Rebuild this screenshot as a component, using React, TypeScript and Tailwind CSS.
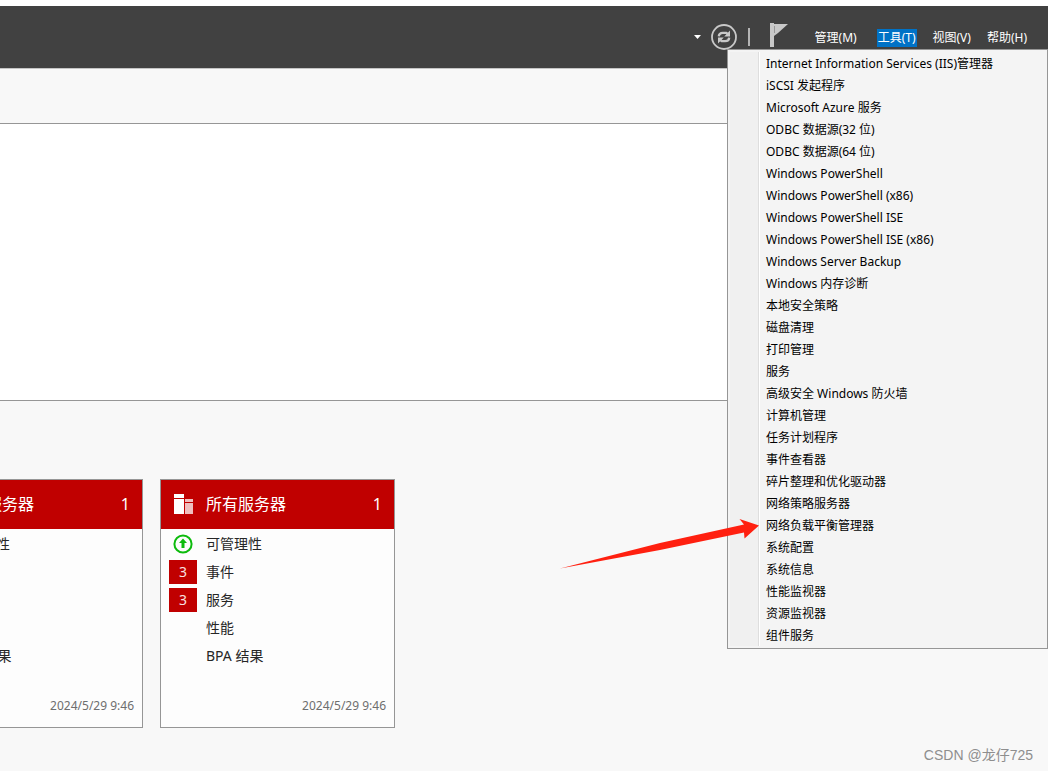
import React from 'react';

const tools = [
  'Internet Information Services (IIS)管理器',
  'iSCSI 发起程序',
  'Microsoft Azure 服务',
  'ODBC 数据源(32 位)',
  'ODBC 数据源(64 位)',
  'Windows PowerShell',
  'Windows PowerShell (x86)',
  'Windows PowerShell ISE',
  'Windows PowerShell ISE (x86)',
  'Windows Server Backup',
  'Windows 内存诊断',
  '本地安全策略',
  '磁盘清理',
  '打印管理',
  '服务',
  '高级安全 Windows 防火墙',
  '计算机管理',
  '任务计划程序',
  '事件查看器',
  '碎片整理和优化驱动器',
  '网络策略服务器',
  '网络负载平衡管理器',
  '系统配置',
  '系统信息',
  '性能监视器',
  '资源监视器',
  '组件服务',
];

const RefreshIcon = () => (
  <svg width="26" height="26" viewBox="0 0 26 26" fill="none" stroke="#c8c8c8">
    <circle cx="13" cy="13" r="12" strokeWidth="1.8" />
    <path d="M7.8 12.4c.2-2.4 1.8-3.6 4-3.6h3.4l1.6 1.2" strokeWidth="2.3" />
    <path d="M18.2 13.6c-.2 2.4-1.8 3.6-4 3.6h-3.4L9.2 16" strokeWidth="2.3" />
    <path d="M19 6.6v5.8h-5.8zM7 19.4v-5.8h5.8z" fill="#c8c8c8" stroke="none" />
  </svg>
);

const FlagIcon = () => (
  <svg width="18" height="24" viewBox="0 0 18 24" fill="#c8c8c8">
    <path d="M0 0h4v24H0z" />
    <path d="M4 1h14L8 10l-4 3z" />
    <path d="M4.5 3v7" stroke="#8a8a8a" strokeWidth="0.8" />
  </svg>
);

const ServersIcon = () => (
  <svg width="19" height="20" viewBox="0 0 19 20" fill="#fff">
    <path d="M0 0h10v4H0zM0 5h10v15H0z" />
    <path d="M11 5h8v3h-8zM11 9h8v11h-8z" fillOpacity="0.75" />
  </svg>
);

const UpIcon = () => (
  <svg width="20" height="20" viewBox="0 0 20 20">
    <circle cx="10" cy="10" r="8.6" fill="none" stroke="#0dbb0d" strokeWidth="2" />
    <path d="M10 4.5l4 4.6h-2.5V14h-3V9.1H6z" fill="#0dbb0d" />
  </svg>
);

const Badge = ({ count }: { count: number }) => (
  <span className="flex h-6 w-7 items-center justify-center bg-[#c00000] text-sm text-[#f8e0e0]">
    {count}
  </span>
);

const ServerCard = ({ title }: { title: string }) => {
  const rows = [
    { label: '可管理性', mark: <UpIcon /> },
    { label: '事件', mark: <Badge count={3} /> },
    { label: '服务', mark: <Badge count={3} /> },
    { label: '性能', mark: null },
    { label: 'BPA 结果', mark: null },
  ];

  return (
    <section className="w-[235px] shrink-0 border border-[#969696] bg-[#fdfdfd]">
      <header className="flex h-[49px] items-center bg-[#c00000] pr-3 pb-0.5 pl-[13px] text-white">
        <ServersIcon />
        <h2 className="ml-[13px] flex-1 text-base">{title}</h2>
        <span className="text-base">1</span>
      </header>
      <ul className="pt-px text-sm text-[#262626]">
        {rows.map((row) => (
          <li key={row.label} className="flex h-7 items-center pl-2">
            <span className="flex w-7 shrink-0 justify-center">{row.mark}</span>
            <a href="#" className="ml-[9px]">{row.label}</a>
          </li>
        ))}
      </ul>
      <p className="pt-[26px] pr-2 pb-[11px] text-right text-xs leading-5 text-[#6e6e6e]">2024/5/29 9:46</p>
    </section>
  );
};

const ToolsMenu = () => (
  <div
    role="menu"
    aria-label="工具"
    className="absolute top-[43px] right-0 w-[321px] border border-[#969696] bg-[#f4f4f4] p-0.5 text-black"
  >
    <div className="flex">
      <div className="w-[29px] border-r border-[#dedede] bg-[#f0f0f0]" />
      <div className="flex flex-1 flex-col border-l border-white">
        {tools.map((tool) => (
          <button key={tool} role="menuitem" className="h-[22px] pt-0.5 pl-1.5 text-left text-xs whitespace-nowrap">
            {tool}
          </button>
        ))}
      </div>
    </div>
  </div>
);

const App = () => {
  return (
    <div className="relative min-h-screen overflow-hidden bg-[#f8f8f8] font-['Noto_Sans','Noto_Sans_CJK_SC',sans-serif]">
      <div className="h-1.5 bg-white" />
      <header className="relative z-10 flex h-[63px] items-center justify-end border-b border-[#c4c4c4] bg-[#414141] pr-[21px] text-white">
        <button aria-label="展开" className="mr-2.5">
          <svg width="7" height="4" viewBox="0 0 7 4" fill="#fff">
            <path d="M0 0h7L3.5 4z" />
          </svg>
        </button>
        <button aria-label="刷新">
          <RefreshIcon />
        </button>
        <div className="mr-5 ml-[11px] h-[18px] w-0.5 bg-[#b4b4b4]" />
        <button aria-label="通知" className="mr-[27px] pb-1">
          <FlagIcon />
        </button>
        <nav className="flex items-center gap-4 pt-px text-xs">
          <button className="mr-1 pt-px">管理(M)</button>
          <button className="h-[18px] bg-[#0072c6] px-px pt-px leading-4">工具(T)</button>
          <button className="pt-px">视图(V)</button>
          <button className="pt-px">帮助(H)</button>
        </nav>
        <ToolsMenu />
      </header>

      <main className="pt-[54px]">
        <div className="h-[278px] border-y border-[#969696] bg-white" />
        <div className="-ml-[92px] flex gap-[17px] pt-[78px]">
          <ServerCard title="本地服务器" />
          <ServerCard title="所有服务器" />
        </div>
      </main>

      {/* arrow pointing at the load balancing entry */}
      <svg
        className="pointer-events-none absolute top-[518px] right-[288px] z-20"
        width="200"
        height="52"
        viewBox="0 0 200 52"
        fill="#ff2010"
      >
        <path d="M0 50.5L100 25 184 6.5 179.5 1 199 7.5 184.5 20.5 184 14.5 100 32z" />
      </svg>

      <p className="absolute right-[15px] bottom-1.5 font-['Liberation_Sans','Noto_Sans_CJK_SC',sans-serif] text-sm text-[#8e8e8e]">
        CSDN @龙仔725
      </p>
    </div>
  );
};

export default App;
